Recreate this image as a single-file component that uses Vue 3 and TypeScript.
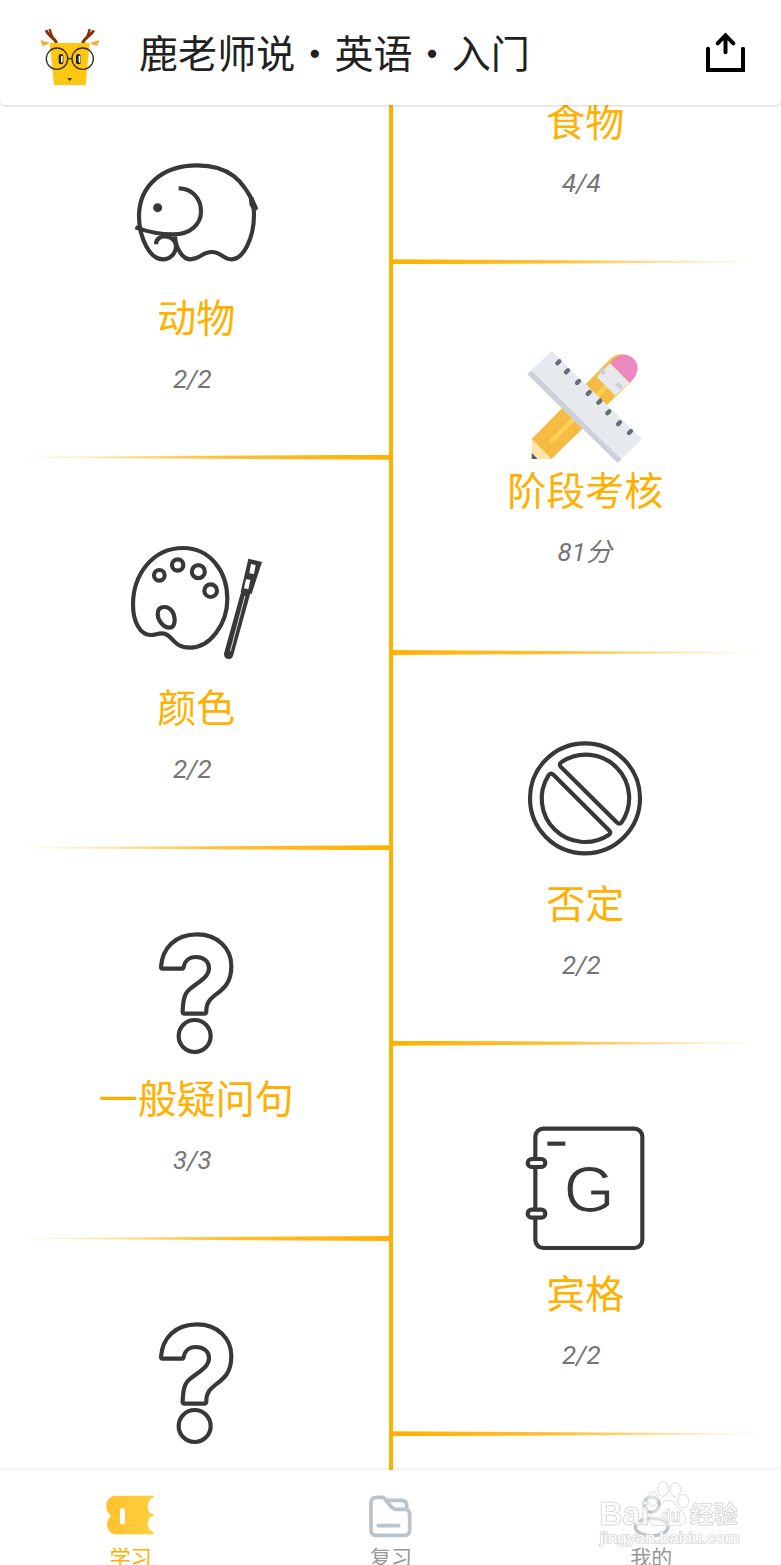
<script setup lang="ts">
type IconName = 'elephant' | 'exam' | 'palette' | 'forbid' | 'question' | 'book' | 'none'

interface Lesson {
  title: string
  score: string
  icon: IconName
}

const left: Lesson[] = [
  { title: '动物', score: '2/2', icon: 'elephant' },
  { title: '颜色', score: '2/2', icon: 'palette' },
  { title: '一般疑问句', score: '3/3', icon: 'question' },
  { title: '', score: '', icon: 'question' },
]

const right: Lesson[] = [
  { title: '食物', score: '4/4', icon: 'none' },
  { title: '阶段考核', score: '81分', icon: 'exam' },
  { title: '否定', score: '2/2', icon: 'forbid' },
  { title: '宾格', score: '2/2', icon: 'book' },
  { title: '', score: '', icon: 'none' },
]

const columns = [
  { side: 'left', lessons: left },
  { side: 'right', lessons: right },
]

const boxes: Record<IconName, string> = {
  elephant: '-15 -22 480 450',
  palette: '-15 -20 480 450',
  question: '-74 -1 480 450',
  exam: '-12 -19 480 450',
  forbid: '-12 -19 480 450',
  book: '-12 -1 480 450',
  none: '0 0 480 450',
}

const ticks: [number, number][] = [
  [145, 81], [171, 108], [204, 140], [236, 173],
  [268, 199], [295, 231], [327, 264], [360, 290],
]
</script>

<template>
  <div class="screen">
    <header class="topbar">
      <svg class="deer" viewBox="105 75 210 195">
        <g fill="none" stroke="#8b2e0b" stroke-width="9">
          <path d="M170 129C160 108 145 110 138 91" />
          <path d="M160 118C154 106 151 100 149 87" stroke-width="7" />
          <path d="M247 129C257 108 272 110 281 91" />
          <path d="M258 118C264 106 267 100 269 87" stroke-width="7" />
        </g>
        <path d="M121 120L148 128L144 133L128 138Z" fill="#f6ae3b" />
        <path d="M298 120L271 128L275 133L292 138Z" fill="#f6ae3b" />
        <path d="M149 129H269L257 255H162Z" fill="#ffc70f" />
        <rect x="176" y="162" width="14" height="31" rx="6" fill="#222" />
        <rect x="183" y="167" width="5" height="21" rx="2.500" fill="#fff" />
        <rect x="228" y="162" width="14" height="31" rx="6" fill="#222" />
        <rect x="236" y="167" width="5" height="21" rx="2.500" fill="#fff" />
        <g fill="none" stroke="#333020" stroke-width="4">
          <circle cx="171" cy="176" r="32" />
          <circle cx="248" cy="176" r="32" />
          <path d="M203 176H216" />
        </g>
        <path d="M201 233Q209 236 217 233L209 243Z" fill="#222" />
      </svg>
      <h1 class="heading">鹿老师说・英语・入门</h1>
      <svg class="share" viewBox="60 90 150 135" fill="none" stroke="#000" stroke-width="12" stroke-linecap="round">
        <path d="M84 146V210H189V146" />
        <path d="M136.500 157V106M113 130L136.500 106L160 130" />
      </svg>
    </header>

    <main class="course">
      <section v-for="col in columns" :key="col.side" class="column" :class="col.side">
        <article v-for="(lesson, i) in col.lessons" :key="i" class="card" :class="lesson.icon">
          <svg class="icon" :viewBox="boxes[lesson.icon]" fill="none" stroke="#383838" stroke-width="12.500">
            <template v-if="lesson.icon === 'elephant'">
              <path d="M409 204C372 115 325 72 232 72C125 72 57 135 57 225C57 290 90 354 128 354C152 354 168 335 168 314C168 280 108 274 108 309" />
              <path d="M165 285C168 325 190 354 210 354C243 354 243 332 275 332C306 332 308 354 335 354C370 354 402 290 402 220C402 200 400 185 395 170" />
              <path d="M176 141C215 141 243 170 243 210C243 250 210 279 160 279C125 279 90 274 46 258" />
              <path d="M388 160L391 190L400 206L409 204Z" fill="#383838" stroke-width="5" />
              <circle cx="113" cy="199" r="13.500" fill="#383838" stroke="none" />
            </template>
            <template v-else-if="lesson.icon === 'palette'">
              <path d="M190 52C268 52 322 120 322 205C322 280 270 351 210 351C155 351 160 308 125 308C110 308 108 313 92 313C62 313 39 275 39 222C39 135 95 52 190 52Z" />
              <circle cx="118" cy="134" r="16" />
              <circle cx="173" cy="103" r="17" />
              <circle cx="235" cy="123" r="19.500" />
              <circle cx="272" cy="180" r="19" />
              <path d="M113 250C113 235 122 229 134 229C152 229 164 248 164 268C164 284 158 291 148 291C130 291 113 268 113 250Z" />
              <path d="M376 190L326 371" stroke-width="28" stroke-linecap="round" />
              <path d="M375 196L331 362" stroke="#fff" stroke-width="2.500" />
              <path d="M385 84L426 94L395 190L362 184Z" fill="#383838" stroke="none" />
              <path d="M393 100L407 103L402 130L388 128Z M378 146L391 147L385 176L372 173Z" fill="#fff" stroke="none" />
            </template>
            <template v-else-if="lesson.icon === 'question'">
              <path d="M64 154C68 100 105 57 172 57C235 57 275 100 275 152C275 242 200 228 200 285V288Q200 295 193 295H135Q128 295 129 288C130 260 132 235 152 220C180 197 208 185 208 158C208 138 192 125 168 125C148 125 135 138 132 155Q131 160 125 160H69Q63 160 64 154Z" />
              <circle cx="165" cy="362" r="48" />
            </template>
            <template v-else-if="lesson.icon === 'forbid'">
              <circle cx="225" cy="216" r="165" />
              <path d="M155 107A130 130 0 0 1 335 288Q328 296 320 288L152 121Q146 112 155 107Z" />
              <path d="M115 148A130 130 0 0 0 296 326Q305 320 297 312L131 146Q122 137 115 148Z" />
            </template>
            <template v-else-if="lesson.icon === 'book'">
              <rect x="76" y="55" width="321" height="358" rx="24" />
              <rect x="53" y="146" width="53" height="24" rx="12" fill="#fff" />
              <rect x="53" y="298" width="53" height="24" rx="12" fill="#fff" />
              <path d="M112 100H166" />
              <text class="letter" x="161" y="304">G</text>
            </template>
            <g v-else-if="lesson.icon === 'exam'" stroke="none">
              <path d="M65 311L302 70Q325 50 350 60L362 140L124 371Z" fill="#f6bb42" />
              <path d="M124 318L285 158" stroke="#ffce54" stroke-width="14" stroke-linecap="round" />
              <path d="M301 84C320 58 345 53 362 64C390 80 390 115 360 142Z" fill="#ed87bf" />
              <path d="M300 84L358 142L316 181L260 124Z" fill="#e6e9ed" />
              <path d="M274 105L280 111M324 149L331 155" stroke="#ccd1d9" stroke-width="14" stroke-linecap="round" />
              <path d="M65 311L124 371H65Z" fill="#ffe3ab" />
              <path d="M65 353L83 371H65Z" fill="#545c66" />
              <path d="M125 46L395 311L323 383L52 117Z" fill="#e6e9ed" />
              <path d="M64 106L334 372L323 383L52 117Z" fill="#ccd1d9" />
              <path v-for="(t, k) in ticks" :key="k" :d="`M${t[0] - 3} ${t[1] + 3}l6 -6`" stroke="#656d78" stroke-width="13" stroke-linecap="round" />
            </g>
          </svg>
          <h2 class="title">{{ lesson.title }}</h2>
          <p class="score">{{ lesson.score }}</p>
          <div class="divider"></div>
        </article>
      </section>
      <div class="spine"></div>
    </main>

    <nav class="tabs">
      <a class="tab active">
        <svg class="tab-icon" viewBox="75 98 150 138">
          <defs>
            <linearGradient id="ticket" x1="0" x2="1" y1="0" y2="0">
              <stop offset="0" stop-color="#ffc12f" />
              <stop offset="1" stop-color="#fdd13c" />
            </linearGradient>
          </defs>
          <path d="M108 106H218Q222 106 222 110Q221 114 214 114C200 125 200 155 214 160Q222 161 222 164Q222 168 214 168C200 178 200 205 214 212Q222 213 222 218Q221 222 216 222H110C80 222 72 185 93 166C70 150 75 106 108 106Z" fill="url(#ticket)" />
          <rect x="120" y="143" width="15" height="49" rx="7" fill="#fff" />
        </svg>
        <span>学习</span>
      </a>
      <a class="tab">
        <svg class="tab-icon" viewBox="857 98 150 138" fill="none" stroke="#b9c4cd" stroke-width="11" stroke-linecap="round" stroke-linejoin="round">
          <path d="M892 111H909C922 111 930 147 950 147H978Q991 148 991 163V210Q991 225 976 225H890Q875 225 875 210V128Q875 111 892 111Z" />
          <path d="M925 120H967Q982 120 982 136V147" />
          <path d="M897 196H958" />
        </svg>
        <span>复习</span>
      </a>
      <a class="tab">
        <svg class="tab-icon" viewBox="138 98 150 138" fill="none" stroke="#b9c4cd" stroke-width="10">
          <circle cx="215" cy="133" r="23" />
          <ellipse cx="215" cy="200" rx="49" ry="26" />
        </svg>
        <span>我的</span>
      </a>
      <svg class="mark" viewBox="0 0 603 315">
        <g fill="#fff" fill-opacity=".5" stroke="#dcdcdc" stroke-width="3">
          <ellipse cx="249" cy="87" rx="16" ry="22" />
          <ellipse cx="286" cy="89" rx="16" ry="21" />
          <ellipse cx="218" cy="117" rx="16" ry="21" />
          <ellipse cx="310" cy="123" rx="16" ry="20" />
          <path d="M265 121C285 121 287 140 303 152C326 168 320 197 296 197H228C200 195 202 165 226 151C244 140 245 121 265 121Z" />
        </g>
        <g class="mark-text">
          <text x="58" y="194" font-size="98" textLength="150" lengthAdjust="spacingAndGlyphs">Bai</text>
          <text x="243" y="185" font-size="56" textLength="58" lengthAdjust="spacingAndGlyphs">du</text>
          <text x="329" y="188" font-size="72" textLength="144" lengthAdjust="spacingAndGlyphs">经验</text>
          <text x="60" y="248" font-size="43" textLength="418" lengthAdjust="spacingAndGlyphs" class="thin">jingyan.baidu.com</text>
        </g>
      </svg>
    </nav>
  </div>
</template>

<style>
body {
  margin: 0;
  background: #fff;
}
</style>

<style scoped>
.screen {
  width: 781px;
  height: 1565px;
  display: flex;
  flex-direction: column;
  overflow: hidden;
  background: #fff;
  font-family: Roboto, "Noto Sans CJK SC", sans-serif;
}
.topbar {
  flex: none;
  height: 105px;
  box-sizing: border-box;
  padding: 0 31px 0 35px;
  display: flex;
  align-items: center;
  background: #fff;
  border-radius: 0 0 5px 5px;
  box-shadow: 0 1px 3px rgba(0, 0, 0, .18);
  position: relative;
  z-index: 2;
}
.deer {
  width: 70px;
  height: 65px;
  margin-top: 10px;
}
.heading {
  flex: 1;
  margin: 4px 0 0 34px;
  font-size: 39.1px;
  font-weight: 400;
  line-height: 56px;
  color: #212121;
}
.share {
  width: 50px;
  height: 45px;
}
.course {
  flex: none;
  height: 1365px;
  display: flex;
  align-items: flex-start;
  overflow: hidden;
  position: relative;
}
.column {
  width: 50%;
  display: flex;
  flex-direction: column;
}
.left {
  margin-top: -36px;
}
.right {
  margin-top: -231.3px;
}
.card {
  height: 390.67px;
  box-sizing: border-box;
  padding-top: 64.5px;
  display: flex;
  flex-direction: column;
  align-items: center;
}
.icon {
  flex: none;
  width: 160px;
  height: 150px;
}
.letter {
  font-family: "Liberation Sans", Arial, sans-serif;
  font-size: 196px;
  fill: #383838;
  stroke: #fff;
  stroke-width: 3px;
}
.title {
  margin: 12px 0 0;
  height: 46px;
  font-size: 39px;
  font-weight: 400;
  line-height: 46px;
  color: #ffb000;
}
.left .title {
  padding-left: 2px;
}
.right .title {
  padding-right: 1px;
}
.score {
  margin: 21.2px 0 0;
  height: 32px;
  padding-right: 6px;
  font-size: 26px;
  font-style: italic;
  line-height: 32px;
  color: #757575;
}
.right .score {
  padding-right: 9px;
}
.exam .title {
  margin-top: -10.2px;
}
.right .exam .score {
  padding-right: 2px;
}
.divider {
  width: 372px;
  height: 5px;
  margin-top: auto;
}
.left .divider {
  align-self: flex-end;
  background: linear-gradient(to left, #ffb000, rgba(255, 176, 0, .8) 45%, rgba(255, 176, 0, 0));
  clip-path: polygon(0 40%, 100% 0, 100% 100%, 0 60%);
}
.right .divider {
  align-self: flex-start;
  background: linear-gradient(to right, #ffb000, rgba(255, 176, 0, .8) 45%, rgba(255, 176, 0, 0));
  clip-path: polygon(0 0, 100% 40%, 100% 60%, 0 100%);
}
.spine {
  position: absolute;
  top: 0;
  bottom: 0;
  left: 389px;
  width: 4px;
  background: #ffb000;
}
.tabs {
  flex: none;
  height: 95px;
  display: flex;
  position: relative;
  background: #fff;
  box-shadow: 0 -1px 4px rgba(0, 0, 0, .08);
}
.tab {
  flex: 1;
  padding-top: 22.700px;
  display: flex;
  flex-direction: column;
  align-items: center;
  font-size: 21px;
  line-height: 30px;
  color: #999;
}
.tab span {
  padding-left: 1px;
}
.tab-icon {
  flex: none;
  width: 50px;
  height: 46px;
  margin-bottom: 4px;
}
.active {
  color: #ffb000;
}
.mark {
  position: absolute;
  left: 580px;
  top: -10px;
  width: 201px;
  height: 105px;
}
.mark-text {
  font-family: "Liberation Sans", "Noto Sans CJK SC", sans-serif;
  font-weight: 700;
  fill: #fff;
  fill-opacity: .75;
  stroke: #dadada;
  stroke-width: 3px;
}
.thin {
  font-weight: 400;
  paint-order: stroke;
  stroke-width: 5px;
  fill-opacity: 1;
}
</style>
